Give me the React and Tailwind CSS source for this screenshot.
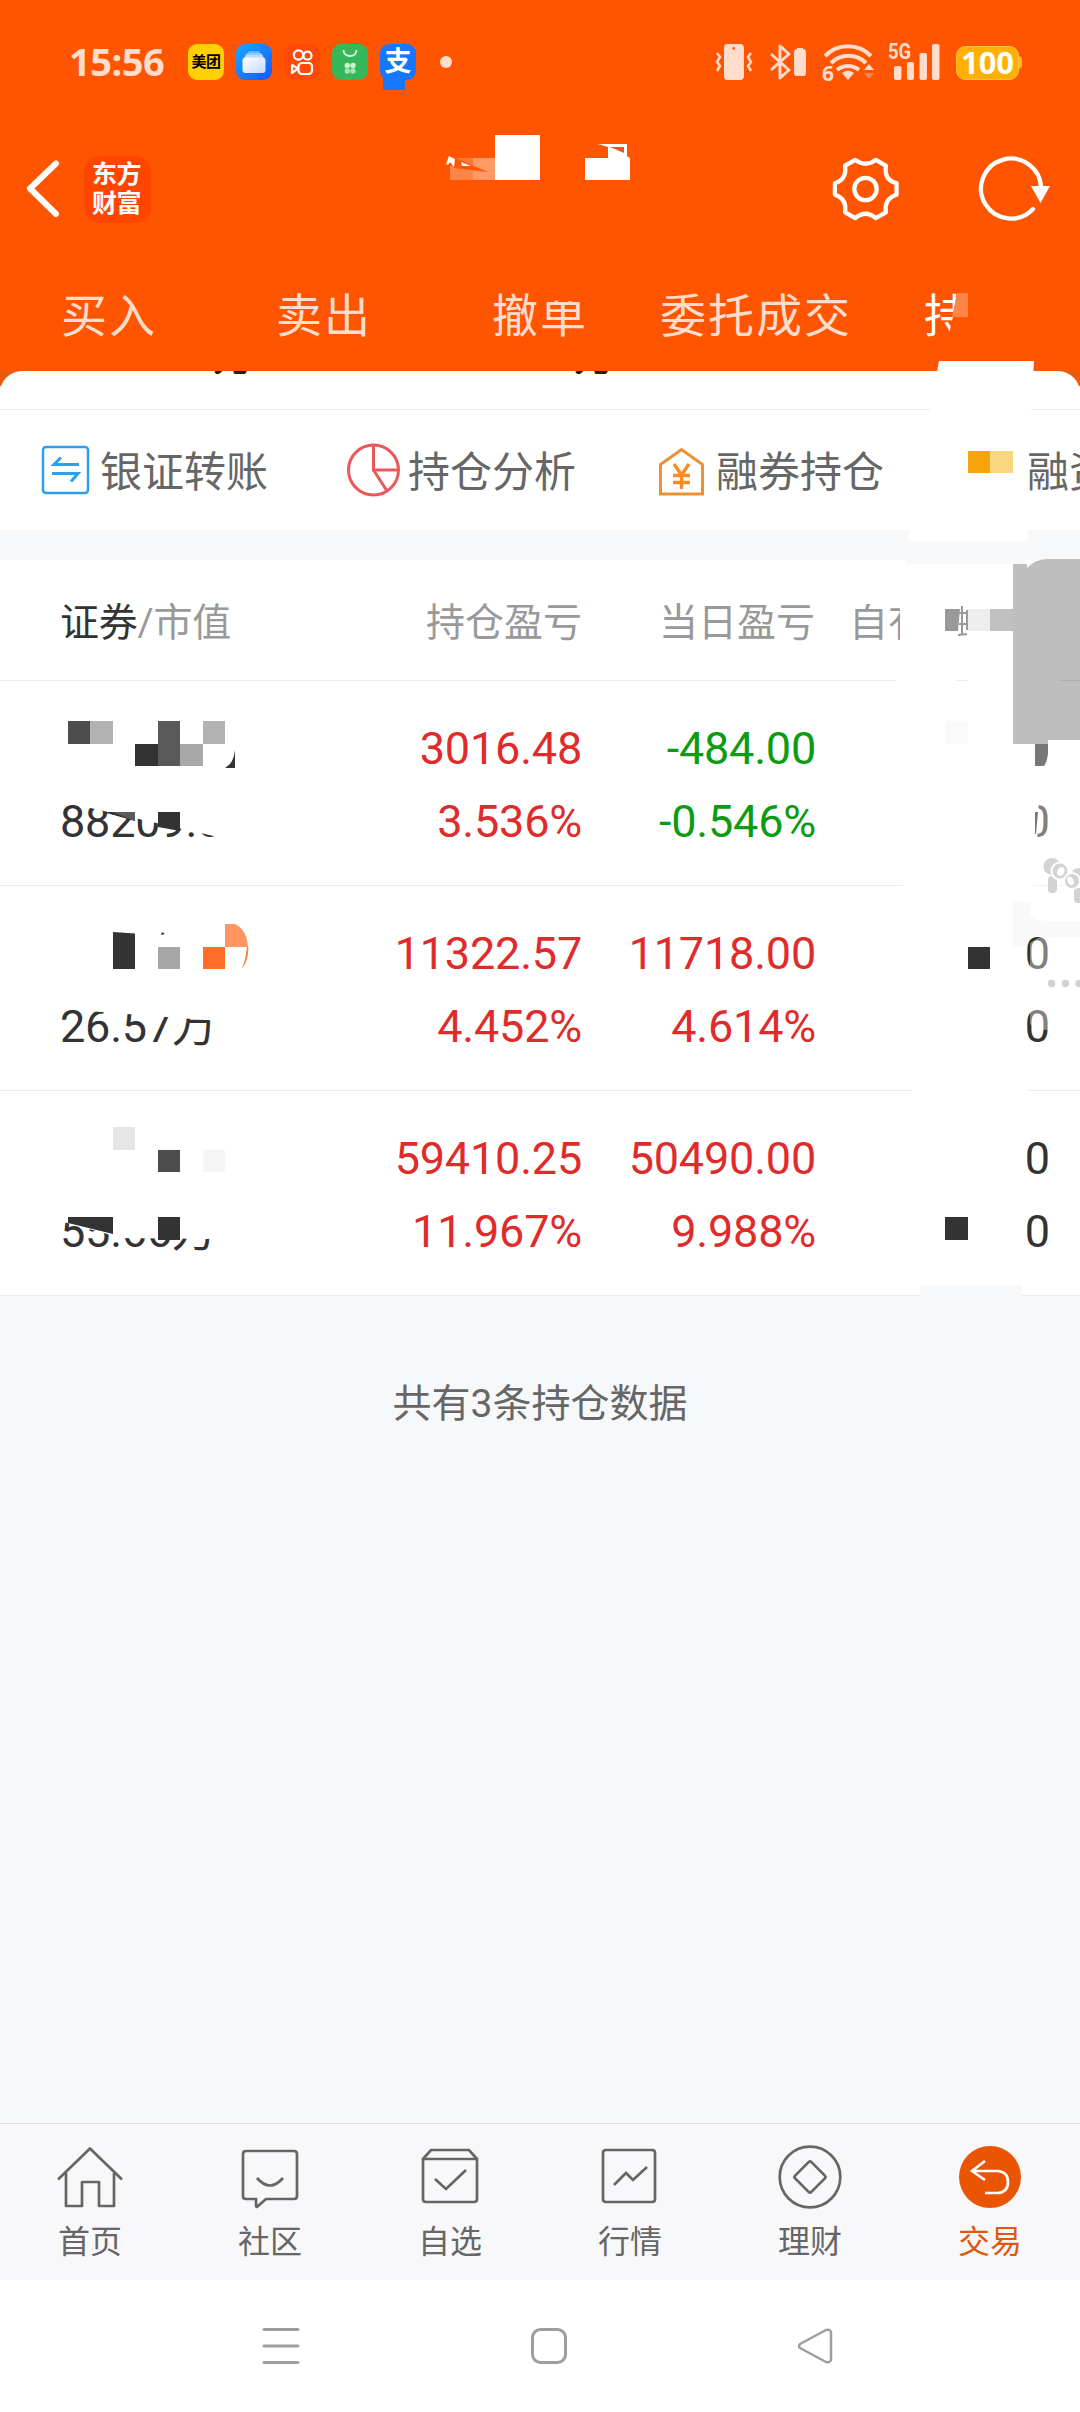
const positions = [
  {
    value: '88209.00',
    clip: '[clip-path:polygon(0_0,26px_0,26px_22px,158px_52px,158px_73px,0_73px)]',
    profit: ['3016.48', '3.536%'],
    today: ['-484.00', '-0.546%'],
    color: 'text-[#0b9c12]',
    available: ['', '0'],
  },
  {
    value: '26.57万',
    clip: '[clip-path:polygon(0_0,28px_0,28px_21px,160px_31px,160px_73px,0_73px)]',
    profit: ['11322.57', '4.452%'],
    today: ['11718.00', '4.614%'],
    color: 'text-[#e02b2b]',
    available: ['0', '0'],
  },
  {
    value: '55.66万',
    clip: '[clip-path:polygon(0_26px,51px_40px,51px_43px,160px_44px,160px_73px,0_73px)]',
    profit: ['59410.25', '11.967%'],
    today: ['50490.00', '9.988%'],
    color: 'text-[#e02b2b]',
    available: ['0', '0'],
  },
];

// privacy blocks over the holding names: x, y, w, h, fill (relative to the row)
const masks = [
  [
    [68, 40, 22, 23, '#4d4d4d'],
    [90, 40, 23, 23, '#b2b2b2'],
    [158, 40, 22, 45, '#595959'],
    [203, 40, 22, 23, '#b2b2b2'],
    [135, 63, 23, 22, '#333333'],
    [180, 63, 23, 22, '#a8a8a8'],
    [945, 40, 23, 23, '#fafafa'],
  ],
  [
    [158, 61, 22, 22, '#a6a6a6'],
    [203, 61, 22, 22, '#ff6d26'],
    [968, 61, 22, 22, '#333333'],
  ],
  [
    [113, 36, 22, 23, '#e5e5e5'],
    [158, 59, 22, 22, '#4d4d4d'],
    [203, 59, 22, 22, '#f5f5f5'],
    [158, 126, 22, 23, '#333333'],
    [945, 126, 23, 23, '#333333'],
  ],
];

const lineGaps = [
  'left-[903px] w-[130px]',
  'left-[912px] w-[116px]',
  'left-[920px] w-[102px]',
];

function StatusBar() {
  return (
    <div className="flex h-[124px] items-center pl-[69px]">
      <span className="mb-[2px] w-[119px] whitespace-nowrap font-['Noto_Sans'] text-[38px] font-bold leading-none tracking-[-0.5px] text-[#ffdccb]">
        15:56
      </span>
      <div className="flex gap-3">
        <div className="flex h-9 w-9 items-center justify-center rounded-[9px] bg-[#ffd100] text-[15px] font-bold tracking-[-0.5px] text-black">
          美团
        </div>
        <svg className="h-9 w-9" viewBox="0 0 36 36">
          <defs>
            <linearGradient id="files" x1="0" y1="0" x2="1" y2="1">
              <stop offset="0" stopColor="#19a8ff" />
              <stop offset="1" stopColor="#1457fb" />
            </linearGradient>
            <linearGradient id="card" x1="0" y1="0" x2="1" y2="1">
              <stop offset="0" stopColor="#ffffff" />
              <stop offset="1" stopColor="#c3d8ff" />
            </linearGradient>
          </defs>
          <rect width="36" height="36" rx="9" fill="url(#files)" />
          <path d="M13 7h10l1 2H12z" fill="#5fb8fb" />
          <path d="M11 9h14l2 3H9z" fill="#8accfc" />
          <path d="M10 11h16l2 3H8z" fill="#b7ddfd" />
          <rect x="6.500" y="13.500" width="23" height="15.500" rx="3" fill="url(#card)" />
        </svg>
        <svg className="h-9 w-9" viewBox="0 0 36 36" fill="none" stroke="#fff" strokeWidth="2.200">
          <rect width="36" height="36" rx="9" fill="#ff4906" stroke="none" />
          <circle cx="14.500" cy="11" r="4.700" />
          <circle cx="23.500" cy="11.700" r="4" />
          <rect x="14.500" y="19" width="13.500" height="11" rx="3.500" />
          <path d="M14 24.500l-6-3.500v8z" strokeLinejoin="round" />
        </svg>
        <svg className="h-9 w-9" viewBox="0 0 36 36">
          <rect width="36" height="36" rx="9" fill="#36b75a" />
          <path d="M11.500 6c0 8 13 8 13 0" fill="none" stroke="#d8f8df" strokeWidth="1.800" />
          <g fill="#c9f3d2">
            <circle cx="15.300" cy="21.500" r="2.700" />
            <circle cx="21" cy="21.500" r="2.700" />
            <circle cx="15.300" cy="27" r="2.700" opacity=".75" />
            <circle cx="21" cy="27" r="2.700" opacity=".75" />
          </g>
        </svg>
        <div className="relative flex h-9 w-9 items-center justify-center rounded-[9px] bg-[#1677ff] text-[27px] font-bold leading-none text-white">
          <span className="absolute left-[3px] top-[33px] h-[13px] w-[22px] bg-[#1677ff]" />
          <span className="relative">支</span>
        </div>
      </div>
      <div className="ml-6 h-3 w-3 rounded-full bg-[#ffdccb]" />
      <svg className="ml-[262px] h-[44px] w-[316px]" viewBox="714 40 316 44" fill="none">
        <g fill="#ffdccb">
          <path fillRule="evenodd" d="M727 44h13q4 0 4 4v28q0 4-4 4h-13q-3 0-3-4V48q0-4 3-4zM733.700 47a1.400 1.400 0 1 0 .01 0z" />
          <path d="M797 49v-1h6v1q3 0 3 3v21q0 3-3 3h-6q-3 0-3-3V52q0-3 3-3z" />
          <rect x="894" y="66" width="7.500" height="14" rx="2" />
          <rect x="907" y="62" width="7" height="18" rx="2" />
          <rect x="919.500" y="53" width="7.500" height="27" rx="2" />
          <rect x="932" y="44" width="7.500" height="36" rx="2" />
          <path d="M842 73q6-5 12 0l-6 7z" />
          <path d="M864 70l5-6 5 6z" />
          <path d="M864 73l5 6 5-6z" opacity=".35" />
        </g>
        <g stroke="#ffdccb" strokeWidth="2.500">
          <path d="M717 53l3 4-3 5 3 4-3 5M751 53l-3 4 3 5-3 4 3 5" />
          <path d="M771 54l18 16-9 8V46l9 8-18 16" strokeWidth="3" strokeLinejoin="round" />
          <path d="M825 56a32 32 0 0 1 46 0M831 63a25 25 0 0 1 35 0M837 70a17 17 0 0 1 22 0" strokeWidth="4" />
        </g>
        <text x="822" y="81" fontSize="21" fontWeight="bold" fill="#ffdccb" fontFamily="Noto Sans">6</text>
        <text x="888" y="59" fontSize="22" fontWeight="bold" fill="#ffdccb" fontFamily="Roboto" textLength="23" lengthAdjust="spacingAndGlyphs">5G</text>
        <rect x="956.500" y="46.500" width="62" height="33" rx="9" fill="#ffb000" stroke="#ffc24a" />
        <path d="M1019 56q3 1 3 3v7q0 2-3 3z" fill="#ffb71c" />
        <text x="961" y="74" fontSize="31" fontWeight="bold" fill="#fff" fontFamily="Noto Sans" textLength="53">100</text>
      </svg>
    </div>
  );
}

function TitleBar() {
  return (
    <div className="flex h-[130px] items-center">
      <svg className="ml-[26px] h-[58px] w-[34px]" viewBox="26 161 34 58" fill="none">
        <path d="M56 164.500L30 189.500l26 25.500" stroke="#fff" strokeWidth="6" strokeLinecap="round" strokeLinejoin="round" />
      </svg>
      <div className="ml-6 flex h-[67px] w-[67px] flex-col items-center justify-center rounded-[15px] bg-[#ff4500] pr-[2px] text-[25px] font-bold leading-[29px] tracking-[-0.5px] text-white">
        <span>东方</span>
        <span>财富</span>
      </div>
      <svg className="mb-[63px] ml-[294px] h-[46px] w-[186px]" viewBox="445 135 186 46">
        <path d="M446 164l3-8 6 3v7h-2l-3-4-2 3z" fill="#fff" />
        <rect x="450" y="166" width="23" height="14" fill="#ff8547" />
        <path d="M455 158h18v8h-18z" fill="#ff7635" />
        <rect x="473" y="158" width="22" height="22" fill="#ff9966" />
        <path d="M455 158l33 14-34-4z" fill="#ff5600" />
        <path d="M461 162l10 4h-9z" fill="#fff" />
        <rect x="495" y="135" width="45" height="45" fill="#fff" />
        <path d="M585 158h23v-11l-10-3h29v12l3 2v22h-45z" fill="#fff" />
        <path d="M610 147h14v6z" fill="#dc5a25" />
      </svg>
      <svg className="ml-[200px] h-[68px] w-[68px]" viewBox="830 154 70 70" fill="none" stroke="#fff" strokeWidth="4.400" strokeLinejoin="round">
        <path d="M855 159q10.500 8 21 0l10.500 6q-2 15 11 18v12q-13 4-11 18L876 219q-10.500-9-21 0l-10.500-6q2-14-10.500-18v-12q12.500-4 10.500-18z" />
        <circle cx="865.500" cy="189" r="11.500" />
      </svg>
      <svg className="ml-[78px] h-[70px] w-[76px]" viewBox="977 154 76 70" fill="none">
        <path d="M1041 188A30 30 0 1 0 1033 209" stroke="#fff" strokeWidth="4.300" strokeLinecap="round" />
        <path d="M1031 186h19l-9.500 17z" fill="#fff" />
      </svg>
    </div>
  );
}

function TopTabs() {
  return (
    <div className="flex h-[117px] items-center whitespace-nowrap pl-[61px] pt-[7px] text-[46px] leading-none tracking-[2px] text-[#ffdccb]">
      <span className="w-[215px]">买入</span>
      <span className="w-[216px]">卖出</span>
      <span className="w-[168px] [clip-path:polygon(0_0,38px_0,50px_7px,96px_9px,96px_60px,0_60px)]">撤单</span>
      <span className="w-[264px]">委托成交</span>
      <div className="relative text-white">
        <span className="block w-[60px] overflow-hidden [clip-path:polygon(0_0,34px_0,24px_46px,0_46px)]">持</span>
        <span className="absolute left-[28px] top-0 h-6 w-4 bg-[#ff8547] [clip-path:polygon(5px_0,16px_0,16px_24px,0_24px)]" />
      </div>
    </div>
  );
}

function Shortcuts() {
  return (
    <div className="flex h-[120px] items-center overflow-hidden whitespace-nowrap text-[42px] leading-none text-[#666]">
      <div className="flex w-[308px] shrink-0 items-center pl-[41px]">
        <svg className="mr-[10px] h-[50px] w-[49px]" viewBox="41 445 49 50" fill="none" stroke="#2d9fee">
          <rect x="43" y="447" width="45" height="46" rx="3" strokeWidth="2.500" />
          <path d="M79 464.500H54l7-7M52 473.500h26l-7 8" strokeWidth="3" />
        </svg>
        <span className="pt-[6px]">银证转账</span>
      </div>
      <div className="flex w-[308px] shrink-0 items-center pl-[38px]">
        <svg className="mr-[8px] h-[54px] w-[54px]" viewBox="346 443 54 54" fill="none" stroke="#e9585c" strokeWidth="3">
          <circle cx="373.500" cy="470" r="25" />
          <path d="M373.500 445v25h25M373.500 470l13.500 21" />
        </svg>
        <span className="pt-[6px]">持仓分析</span>
      </div>
      <div className="flex w-[308px] shrink-0 items-center pl-[41px]">
        <svg className="mr-[9px] h-[52px] w-[50px]" viewBox="657 445 50 52" fill="none" stroke="#eb9130" strokeWidth="3">
          <path d="M660.500 495V465.500l21-15 21 15V495z" />
          <path d="M674 465l7.500 11 7.500-11M681.500 476v14M673 476.500h17M673 483.500h17" stroke="#ff8a1f" strokeWidth="3.300" />
        </svg>
        <span className="pt-[6px]">融券持仓</span>
      </div>
      <div className="flex shrink-0 items-center pl-[44px]">
        <svg className="mr-[14px] h-[50px] w-[45px]" viewBox="0 0 45 50">
          <rect x="0" y="6" width="22" height="22" fill="#f7a30c" />
          <rect x="22" y="6" width="23" height="22" fill="#fbd682" />
        </svg>
        <span className="pt-[6px]">融资持仓</span>
      </div>
    </div>
  );
}

function TableHead() {
  return (
    <div className="relative flex h-[121px] items-center whitespace-nowrap border-b border-[#ebebeb] pt-[7px] text-[39px] leading-none text-[#999]">
      <div className="w-[260px] pl-[60px] tracking-[-0.2px]">
        <span className="text-[#333]">证券</span>/市值
      </div>
      <div className="w-[322px] text-right">持仓盈亏</div>
      <div className="w-[233px] text-right">当日盈亏</div>
      <div className="ml-[34px] w-[51px] overflow-hidden">自有</div>
      <svg className="absolute left-[896px] top-0 h-[121px] w-[162px]" viewBox="896 560 162 121">
        <path d="M945 609h15l-2 22h-13z" fill="#999" />
        <path d="M962 606v28M958 613h10M959 624h10M958 635l9-1M967 610v20" stroke="#999" strokeWidth="2" fill="none" />
        <rect x="968" y="609" width="22" height="22" fill="#eee" />
        <rect x="990" y="609" width="23" height="22" fill="#c0c0c0" />
      </svg>
      <div className="absolute left-[896px] top-[120px] h-px w-[60px] bg-white" />
      <div className="absolute left-[968px] top-[120px] h-px w-[90px] bg-white" />
    </div>
  );
}

function PositionRow({ item, index }) {
  return (
    <div className="relative flex h-[205px] whitespace-nowrap border-b border-[#ebebeb] pt-[31px] text-[45px] leading-[73px]">
      <div className="w-[260px] pl-[60px] pt-[73px] text-[#333]">
        <div className={`h-[73px] w-[160px] overflow-hidden tracking-[-0.2px] ${item.clip}`}>{item.value}</div>
      </div>
      <div className="w-[322px] text-right tracking-[-0.2px] text-[#e02b2b]">
        {item.profit.map((text) => <div key={text} className="h-[73px]">{text}</div>)}
      </div>
      <div className={`w-[234px] text-right tracking-[-0.2px] ${item.color}`}>
        {item.today.map((text) => <div key={text} className="h-[73px]">{text}</div>)}
      </div>
      <div className="w-[234px] text-right text-[#333]">
        {item.available.map((text, i) => <div key={i} className="h-[73px]">{text}</div>)}
      </div>
      <svg className="absolute left-0 top-0 h-[204px] w-[1080px]" viewBox="0 0 1080 204">
        {masks[index].map(([x, y, w, h, fill]) => (
          <rect key={`${x}-${y}`} x={x} y={y} width={w} height={h} fill={fill} />
        ))}
        {index === 0 && (
          <>
            <path d="M235 69v18h-10l5-4q4-5 5-14zM103 131h32v9zM158 131h22v19l-22-4z" fill="#333" />
            <path d="M113 131h22v9z" fill="#5c5c5c" />
            <path d="M1024 115h15l-2 50h-13z" fill="#fff" />
          </>
        )}
        {index === 1 && (
          <>
            <path d="M113 46l22 1.500V83h-22zM161 49l1-3 3 2z" fill="#333" />
            <path d="M225 38h10q12 6 13 23h-23z" fill="#ff9560" />
            <path d="M248.500 61q0 14-7 22 4-8 5.500-22z" fill="#e8834c" />
          </>
        )}
        {index === 2 && <path d="M68 126h45v17l-45-11z" fill="#333" />}
      </svg>
      <div className={`absolute top-[204px] h-px bg-white ${lineGaps[index]}`} />
    </div>
  );
}

// half hidden floating controls on the right edge
function FloatingPanel() {
  return (
    <svg className="absolute right-0 top-[530px] h-[540px] w-[180px]" viewBox="900 530 180 540">
      <path d="M909 530h119v11H908z" fill="#fff" />
      <path d="M906 559h121v5H906z" fill="#f8f9fb" />
      <path d="M1013 564h14v180h-14zM1027 740h21v4h-21z" fill="#bebebe" />
      <path d="M1027 568q8-9 21-9h32v181h-53z" fill="#bebebe" />
      <path d="M1058 680.500h22" stroke="#b0b0b0" />
      <path d="M1035 744h13v10q-1 8-4 12h-9z" fill="#777" />
      <path d="M1013 902h18l-1 14q5 5 20 5h30v16h-53v9h-14z" fill="#f9f9f9" />
      <path d="M1031 790h49v131h-30q-14 0-20-6z" fill="#fff" fillOpacity=".38" />
      <path d="M1030 943q8-6 14-6h36v93h-30q-14 0-20-6z" fill="#fff" fillOpacity=".38" />
      <path d="M1035 812h3l-2 22h-1z" fill="#777" />
      <g fill="#d3d3d3">
        <circle cx="1052" cy="866.500" r="8.500" />
        <rect x="1048" y="876" width="9" height="17" rx="4" />
        <circle cx="1060" cy="871" r="8.500" stroke="#fff" strokeWidth="2" />
        <ellipse cx="1061" cy="871.500" rx="3.500" ry="4.500" fill="#fff" transform="rotate(25 1061 871)" />
        <circle cx="1079" cy="876" r="8" />
        <rect x="1074" y="888" width="9" height="15" rx="4" />
        <circle cx="1072" cy="881" r="8" stroke="#fff" strokeWidth="2" />
        <ellipse cx="1070.500" cy="881" rx="3" ry="4.500" fill="#fff" transform="rotate(-25 1070 881)" />
        <circle cx="1051.500" cy="983.500" r="3.700" />
        <circle cx="1065.500" cy="983.500" r="3.700" />
        <circle cx="1079" cy="983.500" r="3.700" />
      </g>
    </svg>
  );
}

const navItems = [
  {
    label: '首页',
    icon: <path d="M1 34.500L33 3.500l32 31M9 28v33h16V37h17v24h15V28" strokeLinejoin="round" />,
  },
  {
    label: '社区',
    icon: <path d="M9 6h48q3 0 3 3v42q0 3-3 3H29l-8 7q-2 2-2-1v-6H9q-3 0-3-3V9q0-3 3-3zM20 33q13 15 26 0" />,
  },
  {
    label: '自选',
    icon: <path d="M6 14l8-9h38l8 9M6 14h54v40q0 3-3 3H9q-3 0-3-3zM18 34l11 10 20-19" />,
  },
  {
    label: '行情',
    icon: <path d="M9 5h46q3 0 3 3v46q0 3-3 3H9q-3 0-3-3V8q0-3 3-3zM17 40l12-12 7 7 14-13" />,
  },
  {
    label: '理财',
    icon: (
      <>
        <circle cx="33" cy="32" r="30.300" />
        <rect x="21.500" y="20.500" width="23" height="23" rx="2" transform="rotate(45 33 32)" />
      </>
    ),
  },
  {
    label: '交易',
    active: true,
    icon: (
      <>
        <circle cx="33" cy="32" r="31" fill="#ea5504" stroke="none" />
        <path d="M28 16L15 26l13 9M15 26h26q10 1 10 11t-10 11H28" stroke="#fff" />
      </>
    ),
  },
];

function BottomNav() {
  return (
    <nav className="grid h-[157px] grid-cols-6 border-t border-[#e0e0e2] bg-[#f8f8fb]">
      {navItems.map((item) => (
        <div key={item.label} className={`flex flex-col items-center pt-[21px] text-[32px] leading-[42px] ${item.active ? 'text-[#e0580f]' : 'text-[#666]'}`}>
          <svg className="mb-[12px] mr-px h-[64px] w-[66px]" viewBox="0 0 66 64" fill="none" stroke="#666" strokeWidth="2.700">
            {item.icon}
          </svg>
          {item.label}
        </div>
      ))}
    </nav>
  );
}

function SystemNav() {
  return (
    <div className="flex h-[132px] items-center bg-white pl-[262px]">
      <svg className="h-10 w-[38px]" viewBox="0 0 38 40" stroke="#9e9e9e" strokeWidth="3" strokeLinecap="round">
        <path d="M2 3.500h34M2 20h34M2 36.500h34" />
      </svg>
      <svg className="ml-[229px] h-10 w-10" viewBox="0 0 40 40" fill="none" stroke="#9e9e9e" strokeWidth="3">
        <rect x="3.500" y="3.500" width="33" height="33" rx="8" />
      </svg>
      <svg className="ml-[228px] h-10 w-10" viewBox="0 0 40 40" fill="none" stroke="#9e9e9e" strokeWidth="2.500" strokeLinejoin="round">
        <path d="M3 18L29 4q5-1 5 3v26q0 4-5 3L3 22q-2-2 0-4z" />
      </svg>
    </div>
  );
}

export default function App() {
  return (
    <div className="relative flex h-[2412px] w-[1080px] flex-col overflow-hidden bg-[#f7f8fa] font-[Roboto,'Noto_Sans_CJK_SC',sans-serif]">
      <header className="h-[371px] shrink-0 bg-[#ff5500]">
        <StatusBar />
        <TitleBar />
        <TopTabs />
      </header>
      <main className="flex-1">
        <section className="bg-[linear-gradient(#eb5a08_0_15px,#fff_15px)]">
          <div className="relative rounded-t-[22px] bg-white">
            <div className="flex h-[39px] items-start border-b border-[#ebebeb] pl-[213px] text-[42px] font-medium leading-none text-[#222]">
              <div className="flex h-[3px] w-[361px] items-end overflow-hidden"><span className="h-[38px]">万</span></div>
              <div className="flex h-[3px] items-end overflow-hidden"><span className="h-[38px]">万</span></div>
            </div>
            <div className="absolute left-[930px] top-[-10px] h-[49px] w-[104px] bg-white [clip-path:polygon(9px_0,104px_0,101px_100%,0_100%)]" />
            <Shortcuts />
          </div>
        </section>
        <section className="mt-[30px] bg-white">
          <TableHead />
          {positions.map((item, index) => (
            <PositionRow key={item.value} item={item} index={index} />
          ))}
        </section>
        <div className="relative">
          <div className="absolute left-[920px] top-[-11px] h-[11px] w-[102px] bg-[#f7f8fa]" />
          <p className="pt-[88px] text-center text-[39px] leading-[40px] text-[#666]">共有3条持仓数据</p>
        </div>
      </main>
      <FloatingPanel />
      <BottomNav />
      <SystemNav />
    </div>
  );
}
